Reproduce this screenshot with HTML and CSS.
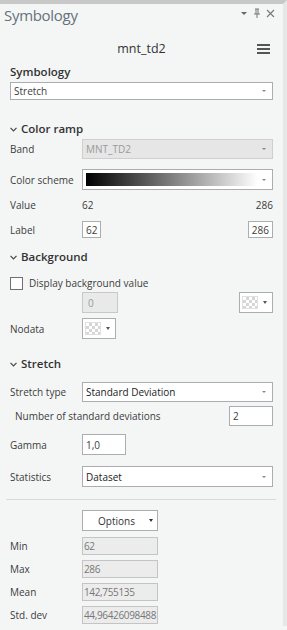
FILE: index.html
```html
<!DOCTYPE html>
<html lang="en">
<head>
  <meta charset="UTF-8">
  <title>Symbology</title>
  <link rel="stylesheet" href="styles.css">
</head>
<body>
<div class="pane">
  <div class="titlebar">
    <span class="title">Symbology</span>
    <span class="winicons">
      <svg width="8" height="8" viewBox="0 0 8 8"><path d="M1 3h6L4 6z" fill="#666"/></svg>
      <svg width="8" height="10" viewBox="0 0 8 10"><path d="M2 1h4M3 1v5M5 1v5M1 6h6M4 6v4" stroke="#777" fill="none"/></svg>
      <svg width="9" height="9" viewBox="0 0 9 9"><path d="M1 1l7 7M8 1l-7 7" stroke="#777" stroke-width="1.1"/></svg>
    </span>
  </div>

  <div class="layer">
    <span>mnt_td2</span>
    <svg class="menu" width="13" height="10" viewBox="0 0 13 10"><path d="M0 1h13M0 5h13M0 9h13" stroke="#555" stroke-width="2"/></svg>
  </div>

  <div class="content">
    <div class="biglabel">Symbology</div>
    <div class="select full"><span>Stretch</span><i class="arr"></i></div>

    <div class="section first"><svg class="chev" width="7" height="5" viewBox="0 0 7 5"><path d="M0.5 0.8L3.5 3.8L6.5 0.8" stroke="#444" fill="none" stroke-width="1.2"/></svg>Color ramp</div>

    <div class="row band">
      <label>Band</label>
      <div class="select grow disabled"><span>MNT_TD2</span><i class="arr"></i></div>
    </div>
    <div class="row scheme">
      <label>Color scheme</label>
      <div class="select grow ramp"><span class="grad"></span><i class="arr"></i></div>
    </div>
    <div class="row value">
      <label>Value</label>
      <div class="grow split"><span>62</span><span>286</span></div>
    </div>
    <div class="row lbl">
      <label>Label</label>
      <div class="grow split"><span class="box small">62</span><span class="box small">286</span></div>
    </div>

    <div class="section bg"><svg class="chev" width="7" height="5" viewBox="0 0 7 5"><path d="M0.5 0.8L3.5 3.8L6.5 0.8" stroke="#444" fill="none" stroke-width="1.2"/></svg>Background</div>

    <div class="check"><span class="cb"></span>Display background value</div>
    <div class="row bgval">
      <label></label>
      <div class="grow split"><span class="box zero">0</span><span class="swatch"><i class="chk"></i><i class="arr"></i></span></div>
    </div>
    <div class="row nodata">
      <label>Nodata</label>
      <span class="swatch"><i class="chk"></i><i class="arr"></i></span>
    </div>

    <div class="section st"><svg class="chev" width="7" height="5" viewBox="0 0 7 5"><path d="M0.5 0.8L3.5 3.8L6.5 0.8" stroke="#444" fill="none" stroke-width="1.2"/></svg>Stretch</div>

    <div class="row stype">
      <label>Stretch type</label>
      <div class="select grow"><span>Standard Deviation</span><i class="arr"></i></div>
    </div>
    <div class="row nstd">
      <label class="indent">Number of standard deviations</label>
      <span class="box nbox">2</span>
    </div>
    <div class="row gamma">
      <label>Gamma</label>
      <span class="box gbox">1,0</span>
    </div>
    <div class="row stats">
      <label>Statistics</label>
      <div class="select grow"><span>Dataset</span><i class="arr"></i></div>
    </div>
  </div>

  <div class="sep"></div>

  <div class="content">
    <div class="row opts">
      <label></label>
      <div class="options"><span>Options</span><i class="arr dark"></i></div>
    </div>
    <div class="row stat"><label>Min</label><span class="box ro">62</span></div>
    <div class="row stat"><label>Max</label><span class="box ro">286</span></div>
    <div class="row stat"><label>Mean</label><span class="box ro">142,755135</span></div>
    <div class="row stat"><label>Std. dev</label><span class="box ro">44,96426098488</span></div>
  </div>
</div>
</body>
</html>
```

FILE: styles.css
```css
html, body { margin: 0; padding: 0; }
body {
  background: #f4f6f6;
  font-family: "Open Sans", "Noto Sans", sans-serif;
  font-size: 10px;
  color: #3c3c3c;
  width: 287px;
  height: 630px;
  overflow: hidden;
}
.pane {
  border-top: 4px solid #c8c8c8;
  border-right: 4px solid #e6e7e7;
  height: 626px;
  box-sizing: border-box;
}
.titlebar {
  display: flex;
  justify-content: space-between;
  align-items: center;
  height: 22px;
  padding: 0 8px 0 4px;
}
.title { font-size: 15px; color: #66717a; letter-spacing: -0.3px; }
.winicons { display: flex; gap: 5px; align-items: center; margin-top: -4px; }
.layer {
  position: relative;
  height: 20px;
  margin-top: 12px;
  display: flex;
  justify-content: center;
  align-items: center;
  font-size: 12.5px;
  color: #333;
}
.menu { position: absolute; right: 13px; top: 6px; }
.content { padding: 0 10px; }
.biglabel { font-size: 11.5px; font-weight: 600; color: #333; margin-top: 5px; height: 17px; line-height: 17px; }
.select {
  display: flex;
  align-items: center;
  justify-content: space-between;
  border: 1px solid #abadb3;
  background: #fff;
  box-sizing: border-box;
  padding: 0 6px 0 3px;
  height: 18px;
}
.select.full { margin-top: 2px; }
.select.disabled { background: #e6e6e6; border-color: #cfcfcf; color: #999; }
.arr {
  width: 0; height: 0;
  border-left: 2px solid transparent;
  border-right: 2px solid transparent;
  border-top: 2.5px solid #888;
}
.arr.dark { border-top-color: #333; border-left-width: 2.5px; border-right-width: 2.5px; border-top-width: 3px; }
.section {
  font-size: 11.5px;
  font-weight: 600;
  color: #333;
  height: 18px;
  line-height: 18px;
  margin-top: 18px;
  display: flex;
  align-items: center;
}
.section.first { margin-top: 20px; }
.section.bg { margin-top: 10px; }
.section.st { margin-top: 16px; }
.chev { margin-right: 4px; }
.row { display: flex; align-items: center; }
.row label { width: 72px; flex: none; }
.grow { flex: 1; }
.band { margin-top: 1px; }
.band .select { height: 20px; }
.scheme { margin-top: 10px; }
.scheme .select { height: 21px; padding-left: 3px; }
.grad {
  display: block;
  width: 172px;
  height: 13px;
  background: linear-gradient(to right, #000, #fff);
}
.split { display: flex; justify-content: space-between; align-items: center; }
.value { margin-top: 7px; height: 16px; }
.lbl { margin-top: 8px; height: 17px; }
.box {
  border: 1px solid #abadb3;
  background: #fff;
  box-sizing: border-box;
  display: flex;
  align-items: center;
  padding: 0 3px;
}
.box.small { height: 17px; padding: 0 3px; }
.check { display: flex; align-items: center; margin-top: 10px; height: 14px; }
.cb { width: 11px; height: 11px; border: 1px solid #707070; background: #fff; margin-right: 6px; }
.bgval { margin-top: 2px; height: 21px; }
.zero { width: 36px; height: 21px; background: #e9e9e9; border-color: #c8c8c8; color: #999; padding-left: 5px; }
.swatch {
  display: flex;
  align-items: center;
  gap: 5px;
  width: 34px;
  height: 21px;
  box-sizing: border-box;
  border: 1px solid #abadb3;
  background: #fff;
  padding-left: 2px;
}
.chk {
  width: 16px;
  height: 13px;
  background-color: #fff;
  background-image:
    linear-gradient(45deg, #d6d6d6 25%, transparent 25%, transparent 75%, #d6d6d6 75%),
    linear-gradient(45deg, #d6d6d6 25%, transparent 25%, transparent 75%, #d6d6d6 75%);
  background-size: 6px 6px;
  background-position: 0 0, 3px 3px;
  border: 1px solid #e0e0e0;
  box-sizing: border-box;
}
.swatch .arr { border-top-color: #555; border-left-width: 2.5px; border-right-width: 2.5px; border-top-width: 3px; }
.nodata { margin-top: 5px; height: 21px; }
.stype { margin-top: 9px; }
.stype .select { height: 20px; color: #222; }
.nstd { margin-top: 4px; justify-content: space-between; }
.indent { width: auto !important; padding-left: 5px; }
.nbox { width: 44px; height: 20px; }
.gamma { margin-top: 8px; }
.gbox { width: 44px; height: 21px; }
.stats { margin-top: 11px; }
.stats .select { height: 21px; color: #222; }
.sep { height: 1px; background: #d8d9d9; margin: 12px 7px 0 6px; }
.opts { margin-top: 10px; }
.options {
  width: 76px;
  height: 21px;
  box-sizing: border-box;
  border: 1px solid #abadb3;
  background: #fff;
  display: flex;
  align-items: center;
  justify-content: flex-end;
  gap: 14px;
  padding-right: 4px;
  color: #333;
}
.stat { margin-top: 6px; }
.stat + .stat { margin-top: 5px; }
.ro { width: 76px; height: 18px; background: #ececec; border-color: #c4c4c4; color: #777; overflow: hidden; white-space: nowrap; padding: 0 1px; letter-spacing: -0.35px; }
```
